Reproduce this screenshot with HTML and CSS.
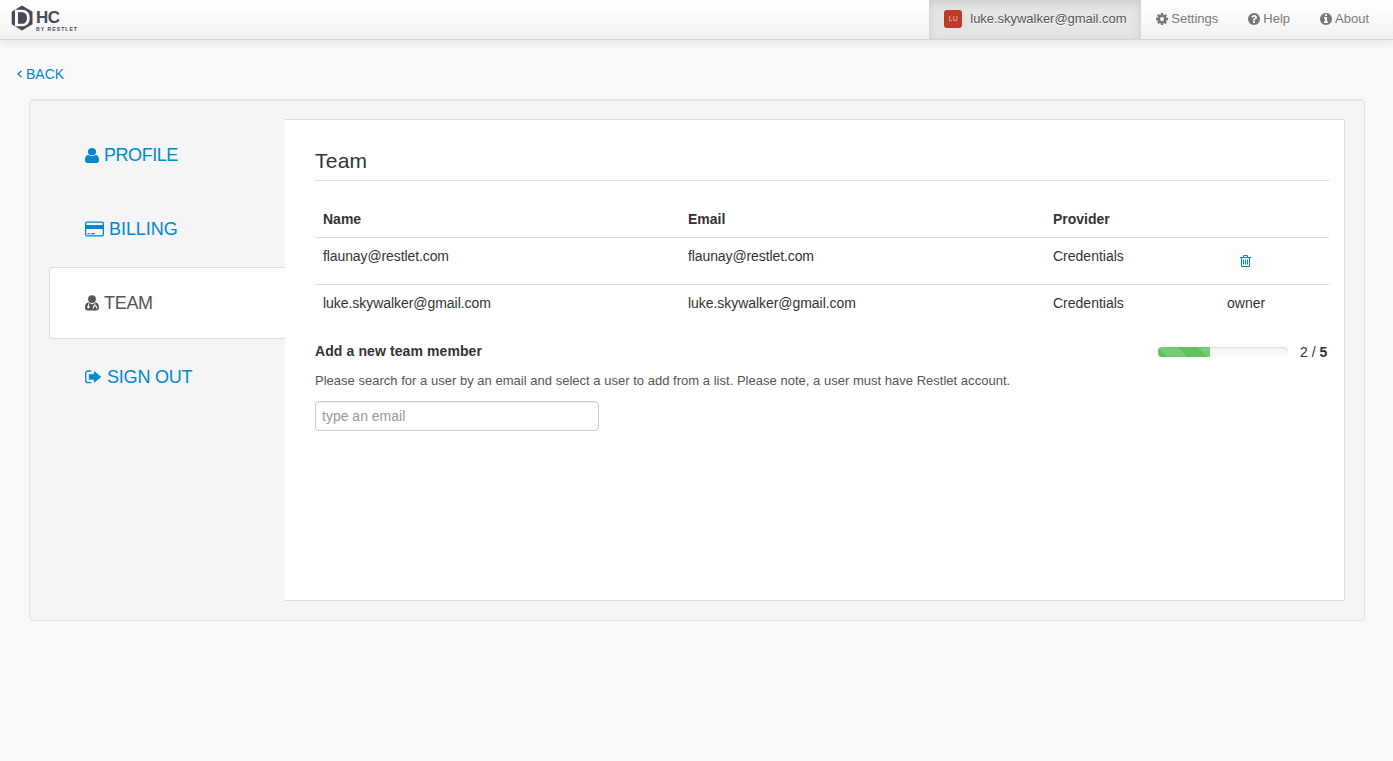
FILE: index.html
```html
<!DOCTYPE html>
<html lang="en">
<head>
<meta charset="utf-8">
<title>Team</title>
<link rel="stylesheet" href="styles.css">
</head>
<body>
<header class="topbar">
  <a class="brand">
    <svg class="brand-mark" width="22" height="26" viewBox="0 0 22 26"><path fill="#454a55" d="M11 .5 21.500 6.700v12.600L11 25.500.7 19.300V6.700z"/><path fill="#fafafa" d="M4 4.700h7c4.800 0 7.700 3.300 7.700 8.300s-2.900 8.300-7.700 8.300H4z"/><path fill="#454a55" d="M7 7.200h4c3.200 0 5 2.200 5 5.800s-1.800 5.800-5 5.800H7z"/></svg>
    <span class="brand-text"><b class="brand-name">HC</b><span class="brand-sub">BY RESTLET</span></span>
  </a>
  <nav class="menu">
    <a class="menu-item active"><span class="avatar">LU</span><span class="mail">luke.skywalker@gmail.com</span></a>
    <a class="menu-item"><svg class="fa" viewBox="128 128 1536 1536"><path d="M1152 896q0-106-75-181t-181-75-181 75-75 181 75 181 181 75 181-75 75-181zm512-109v222q0 12-8 23t-20 13l-185 28q-19 54-39 91 35 50 107 138 10 12 10 25t-9 23q-27 37-99 108t-94 71q-12 0-26-9l-138-108q-44 23-91 38-16 136-29 186-7 28-36 28h-222q-14 0-24.500-8.500t-11.500-21.500l-28-184q-49-16-90-37l-141 107q-10 9-25 9-14 0-25-11-126-114-165-168-7-10-7-23 0-12 8-23 15-21 51-66.500t54-70.500q-27-50-41-99l-183-27q-13-2-21-12.500t-8-23.500v-222q0-12 8-23t19-13l186-28q14-46 39-92-40-57-107-138-10-12-10-24 0-10 9-23 26-36 98.500-107.500t94.500-71.500q13 0 26 10l138 107q44-23 91-38 16-136 29-186 7-28 36-28h222q14 0 24.500 8.500t11.500 21.500l28 184q49 16 90 37l142-107q9-9 24-9 13 0 25 10 129 119 165 170 7 8 7 22 0 12-8 23-15 21-51 66.500t-54 70.500q26 50 41 98l183 28q13 2 21 12.500t8 23.500z"/></svg>Settings</a>
    <a class="menu-item"><svg class="fa" viewBox="128 128 1536 1536"><path d="M1024 1376v-192q0-14-9-23t-23-9h-192q-14 0-23 9t-9 23v192q0 14 9 23t23 9h192q14 0 23-9t9-23zm256-672q0-88-55.500-163t-138.500-116-170-41q-243 0-371 213-15 24 8 42l132 100q7 6 19 6 16 0 25-12 53-68 86-92 34-24 86-24 48 0 85.500 26t37.500 59q0 38-20 61t-68 45q-63 28-115.500 86.500t-52.500 125.500v36q0 14 9 23t23 9h192q14 0 23-9t9-23q0-19 21.500-49.500t54.500-49.500q32-18 49-28.500t46-35 44.500-48 28-60.500 12.500-81zm384 192q0 209-103 385.500t-279.500 279.500-385.500 103-385.500-103-279.500-279.500-103-385.500 103-385.500 279.500-279.500 385.500-103 385.500 103 279.500 279.500 103 385.500z"/></svg>Help</a>
    <a class="menu-item"><svg class="fa" viewBox="128 128 1536 1536"><path d="M1152 1376v-160q0-14-9-23t-23-9h-96v-512q0-14-9-23t-23-9h-320q-14 0-23 9t-9 23v160q0 14 9 23t23 9h96v320h-96q-14 0-23 9t-9 23v160q0 14 9 23t23 9h448q14 0 23-9t9-23zm-128-896v-160q0-14-9-23t-23-9h-192q-14 0-23 9t-9 23v160q0 14 9 23t23 9h192q14 0 23-9t9-23zm640 416q0 209-103 385.500t-279.500 279.500-385.500 103-385.500-103-279.500-279.500-103-385.500 103-385.500 279.500-279.500 385.500-103 385.500 103 279.500 279.500 103 385.500z"/></svg>About</a>
  </nav>
</header>
<main class="page">
  <a class="back"><svg width="6" height="8" viewBox="0 0 6 8"><path d="M4.500.7 1 4l3.500 3.300" class="line" stroke-width="1.300"/></svg><span>BACK</span></a>
  <section class="well">
    <nav class="tabs">
      <a class="tab"><svg width="14" height="15" viewBox="256 128 1280 1536" preserveAspectRatio="none"><path d="M1536 1399q0 109-62.500 187t-150.500 78h-854q-88 0-150.500-78t-62.500-187q0-85 8.500-160.500t31.500-152 58.500-131 94-89 134.500-34.500q131 128 313 128t313-128q76 0 134.500 34.500t94 89 58.500 131 31.500 152 8.500 160.500zm-256-887q0 159-112.500 271.500t-271.500 112.500-271.500-112.500-112.500-271.500 112.500-271.500 271.500-112.500 271.500 112.500 112.500 271.500z"/></svg><span class="t-profile">PROFILE</span></a>
      <a class="tab"><svg width="19" height="16" viewBox="0 0 19.500 16" preserveAspectRatio="none"><path fill-rule="evenodd" d="M2 .5h15.500a2 2 0 0 1 2 2v11a2 2 0 0 1-2 2H2a2 2 0 0 1-2-2v-11a2 2 0 0 1 2-2zM1.300 4h16.900V2.500a.8.8 0 0 0-.8-.8H2a.8.8 0 0 0-.7.8zm0 4v5.500c0 .5.300.8.700.8h15.400c.5 0 .8-.3.800-.8V8zM2.600 12h2.200v1.200H2.600zm3.600 0h3.800v1.200H6.200z"/></svg><span class="t-billing">BILLING</span></a>
      <a class="tab current"><svg width="14" height="16" viewBox="0 0 14 16"><circle cx="7" cy="4.100" r="3.900"/><path fill-rule="evenodd" d="M3.300 7.200C.8 7.700 0 10 0 12.600 0 14.500 1 15.500 2.700 15.500h8.600c1.700 0 2.700-1 2.700-2.900 0-2.600-.8-4.900-3.300-5.400L7 9.400zM3 8.500h.9v2.200a1.300 1.300 0 1 1-.9 0zM9.400 8.300l.9.300v1.600c1.500.3 2 1.200 2 2.500v1.100h-1v-1c0-1.700-2.500-1.700-2.500 0v1h-1v-1.100c0-1.300.4-2.200 1.600-2.500z"/></svg><span class="t-team">TEAM</span></a>
      <a class="tab"><svg width="17" height="14" viewBox="0 0 17 14"><path fill="none" stroke="currentColor" stroke-width="1.300" d="M6.300 1H3A2.300 2.300 0 0 0 .7 3.300v7.100A2.300 2.300 0 0 0 3 12.700h3.300"/><path d="M9.300 1.500 15.900 6.900 9.300 12.200V9.300H4.200V4.400h5.100z" stroke="currentColor" stroke-width=".7" stroke-linejoin="round"/></svg><span class="t-out">SIGN OUT</span></a>
    </nav>
    <div class="panel">
      <h1 class="title">Team</h1>
      <div class="table">
        <div class="row head"><span>Name</span><span>Email</span><span>Provider</span><span></span></div>
        <div class="row"><span class="flaunay">flaunay@restlet.com</span><span class="flaunay">flaunay@restlet.com</span><span>Credentials</span><span class="trash"><svg width="11" height="12" viewBox="0 0 11 12"><path fill="none" stroke="#0088cc" d="M0 2.500h11M3.500 2.500v-2h4v2M1.500 2.500v9h8v-9M3.500 4.500v5M5.500 4.500v5M7.500 4.500v5"/></svg></span></div>
        <div class="row"><span class="luke">luke.skywalker@gmail.com</span><span class="luke">luke.skywalker@gmail.com</span><span>Credentials</span><span>owner</span></div>
      </div>
      <div class="add-head">
        <h2 class="subtitle">Add a new team member</h2>
        <div class="quota"><div class="progress"><div class="bar" style="width:40%"></div></div><span class="count">2 / <b>5</b></span></div>
      </div>
      <p class="hint">Please search for a user by an email and select a user to add from a list. Please note, a user must have Restlet account.</p>
      <input class="email" type="text" placeholder="type an email">
    </div>
  </section>
</main>
</body>
</html>
```
FILE: styles.css
```css
* { box-sizing: border-box; }
body { margin: 0; min-height: 761px; background: #f9f9f9; color: #333; font: 14px/20px "Liberation Sans", Arial, sans-serif; }
svg { fill: currentColor; flex: none; }
.line { fill: none; stroke: currentColor; }
.topbar { height: 40px; display: flex; justify-content: space-between; background: linear-gradient(#fff, #f2f2f2); border-bottom: 1px solid #d4d4d4; box-shadow: 0 1px 10px rgba(0,0,0,.1); }
.brand { display: flex; padding: 5px 0 0 11px; color: #454a55; }
.brand-mark { display: block; }
.brand-text { display: flex; flex-direction: column; padding: 4px 0 0 3px; }
.brand-name { font: bold 17px/17px "Liberation Sans", sans-serif; letter-spacing: -.5px; }
.brand-sub { font: bold 5px/6px "Liberation Sans", sans-serif; letter-spacing: 1.1px; white-space: nowrap; }
.menu { display: flex; padding-right: 8px; }
.menu-item { display: flex; align-items: center; padding: 0 15px 2px; color: #777; font-size: 13px; text-shadow: 0 1px 0 #fff; }
.menu-item:last-child { padding-right: 16px; }
.menu-item.active { width: 212px; color: #555; background: #e5e5e5; box-shadow: inset 0 3px 8px rgba(0,0,0,.125); white-space: nowrap; }
.mail { letter-spacing: -.03px; }
.fa { width: 12px; height: 12px; margin-right: 3px; }
.avatar { flex: none; width: 18px; height: 18px; margin-right: 8px; border-radius: 3px; background: #c0392b; color: #f0c8c4; font-size: 7px; line-height: 18px; text-align: center; text-shadow: none; }
.page { padding: 24px 28px 0 29px; }
.back { display: flex; align-items: center; gap: 3px; height: 20px; margin-left: -12px; color: #08c; }
.well { height: 522px; margin-top: 15px; padding: 19px; display: flex; background: #f5f5f5; border: 1px solid #e3e3e3; border-radius: 4px; box-shadow: inset 0 1px 1px rgba(0,0,0,.05); }
.tabs { width: 236px; display: flex; flex-direction: column; gap: 2px; }
.tab { height: 72px; display: flex; align-items: center; gap: 5px; padding-left: 35px; border: 1px solid transparent; color: #08c; font-size: 18px; }
.tab.current { background: #fff; color: #555; border-color: #ddd; border-right: 0; border-radius: 4px 0 0 4px; }
.t-profile { letter-spacing: -.45px; }
.t-billing { letter-spacing: -.05px; }
.t-team { letter-spacing: -.3px; }
.t-out { letter-spacing: -.2px; }
.panel { flex: 1; background: #fff; border: 1px solid #ddd; border-left: 0; padding: 20px 15px 0 30px; }
.title { margin: 0 0 20px; height: 41px; border-bottom: 1px solid #e0e0e0; font-weight: 400; font-size: 21px; line-height: 42px; letter-spacing: .25px; }
.row { display: grid; grid-template-columns: 365px 365px 174px 1fr; height: 47px; padding: 8px; border-top: 1px solid #ddd; }
.row.head { height: 36px; border: 0; font-weight: bold; }
.flaunay { letter-spacing: -.1px; }
.luke { letter-spacing: -.05px; }
.trash { padding: 9px 0 0 13px; line-height: 0; color: #08c; }
.add-head { display: flex; justify-content: space-between; height: 39px; padding-top: 10px; }
.subtitle { margin: 0; font-size: 14px; line-height: 20px; letter-spacing: .1px; }
.quota { display: flex; align-items: center; height: 22px; }
.progress { width: 130px; height: 10px; margin-right: 12px; overflow: hidden; border-radius: 4px; background: linear-gradient(#f5f5f5, #f9f9f9); box-shadow: inset 0 1px 2px rgba(0,0,0,.1); }
.count { width: 29px; white-space: nowrap; }
.bar { height: 100%; background: linear-gradient(45deg, rgba(255,255,255,.15) 25%, transparent 25%, transparent 50%, rgba(255,255,255,.15) 50%, rgba(255,255,255,.15) 75%, transparent 75%) 0 0 / 40px 40px #5ec25e; }
.hint { margin: 1px 0 10px; color: #555; font-size: 13px; letter-spacing: .018px; white-space: nowrap; }
.email { display: block; width: 284px; height: 30px; padding: 4px 6px; border: 1px solid #ccc; border-radius: 4px; background: #fff; box-shadow: inset 0 1px 1px rgba(0,0,0,.075); font: 14px/20px "Liberation Sans", Arial, sans-serif; }
.email::placeholder { color: #999; }
```
